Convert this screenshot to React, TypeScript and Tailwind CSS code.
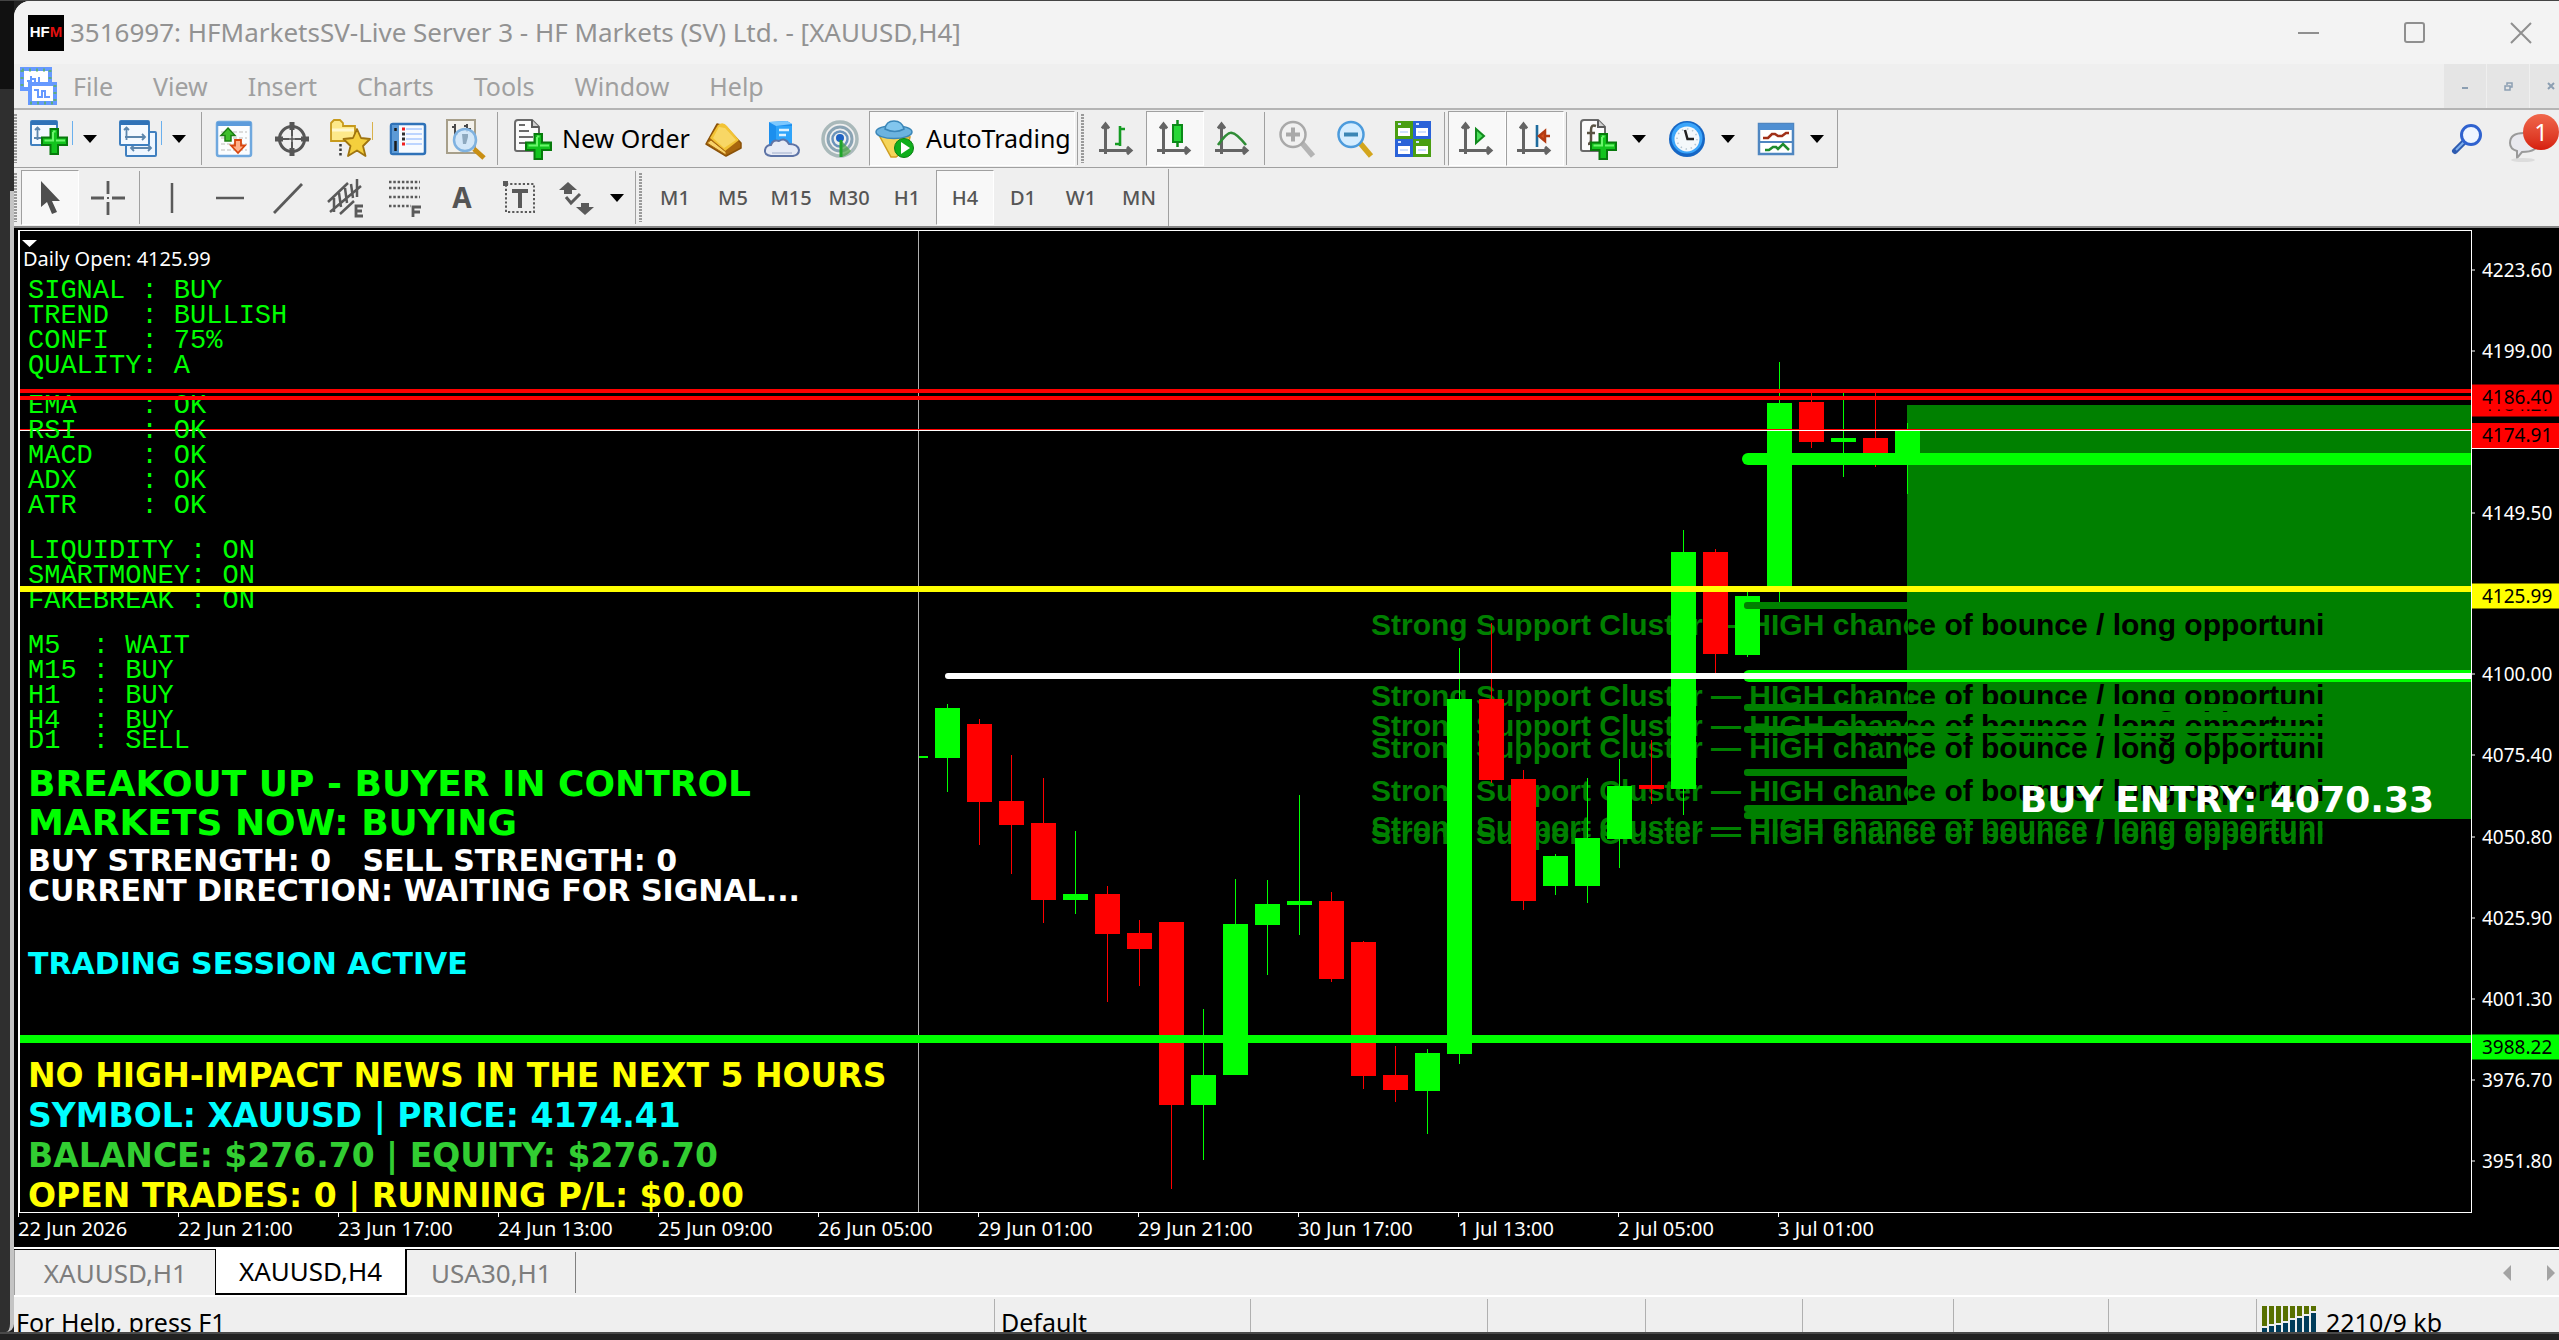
import React from "react";

type Kids = { children: React.ReactNode };

/* ---------- icons ---------- */

const Ico = ({ children, s = 38 }: Kids & { s?: number }) => (
  <svg width={s} height={s} viewBox={`0 0 ${s} ${s}`} fill="none" className="shrink-0 overflow-visible" aria-hidden="true">
    {children}
  </svg>
);

const Plus = ({ x, y }: { x: number; y: number }) => (
  <g transform={`translate(${x} ${y})`}>
    <path d="M9.500 1h7.500v8.500h9v7.500h-9v9h-7.500v-9H1V9.500h8.500z" fill="#12c41d" stroke="#077a0c" strokeWidth="2" />
    <path d="M12 3.500h2.500M12 4v8.500H3.500M15 12.500h9" stroke="#6cf56c" strokeWidth="2" />
  </g>
);

const NewChart = () => (
  <Ico>
    <rect x="1" y="1" width="26" height="24" rx="1" fill="#f4f9ff" stroke="#3f7fbf" strokeWidth="2" />
    <rect x="1" y="1" width="26" height="4" fill="#2f72b8" />
    <path d="M7.500 8v12M5 10l2.500-2.500L10 10M4 18h9" stroke="#5c86ad" strokeWidth="1.800" />
    <Plus x={11} y={8} />
    <path d="M42.500 1v24" stroke="#6ab0ee" />
  </Ico>
);

const Profiles = () => (
  <Ico>
    <rect x="7" y="12" width="30" height="24" rx="1" fill="#eef6ff" stroke="#3f7fbf" strokeWidth="2" />
    <path d="M12 28h20M15 25l-3 3 3 3M29 25l3 3-3 3" stroke="#5c86ad" strokeWidth="1.800" />
    <rect x="1" y="1" width="29" height="24" rx="1" fill="#f4f9ff" stroke="#3f7fbf" strokeWidth="2" />
    <rect x="1" y="1" width="29" height="4" fill="#2f72b8" />
    <path d="M7.500 8v12M5 10l2.500-2.500L10 10M6 17h20M23 14l3 3-3 3" stroke="#5c86ad" strokeWidth="1.800" />
    <path d="M42.500 1v24" stroke="#6ab0ee" />
  </Ico>
);

const MarketWatch = () => (
  <Ico>
    <rect x="2" y="2" width="34" height="34" rx="2" fill="#fbfdff" stroke="#6fa8de" strokeWidth="2.500" />
    <rect x="2" y="2" width="34" height="4" fill="#5b9bdc" />
    <path d="M6 12h26M6 18h26M6 24h26M6 30h26" stroke="#dcdcdc" strokeWidth="2" strokeDasharray="4 2" />
    <path d="M13 8l7 7.500h-4V21h-6v-5.500H6z" fill="#3fbf2c" stroke="#1d7d14" strokeWidth="1.500" />
    <path d="M23 33l-7-7.500h4V20h6v5.500h4z" fill="#ffb08a" stroke="#d8460f" strokeWidth="1.800" />
  </Ico>
);

const Crosshair = () => (
  <Ico>
    <circle cx="19" cy="19" r="12.500" stroke="#565656" strokeWidth="3" />
    <path d="M19 2v34M2 19h34" stroke="#565656" strokeWidth="2" />
    <path d="M19 2v8M19 28v8M2 19h8M28 19h8" stroke="#565656" strokeWidth="5" />
    <circle cx="19" cy="19" r="3" fill="#efefef" />
    <path d="M19 15v8M15 19h8" stroke="#565656" strokeWidth="1.500" />
  </Ico>
);

const FolderStar = () => (
  <Ico s={40}>
    <path d="M1 4l3-3h6l3 3v3h12v15H1z" fill="#fde98a" stroke="#c79a1c" strokeWidth="1.800" />
    <path d="M2 11h22" stroke="#fff8cf" strokeWidth="3" />
    <path d="M10.500 25v12" stroke="#3a3a3a" strokeWidth="2.500" strokeDasharray="2.500 2" />
    <path d="M27 10l4 9 9 1-7 7 2.500 10L27 31.500 18 37l2.500-10-7-7 9.500-1z" fill="#f4cf3d" stroke="#9f7410" strokeWidth="1.800" strokeLinejoin="round" />
    <path d="M42.500 3v18" stroke="#d9b24a" />
  </Ico>
);

const DataWindow = () => (
  <Ico>
    <rect x="2" y="4" width="34" height="30" rx="2" fill="#f7fbff" stroke="#2f72b8" strokeWidth="2.500" />
    <rect x="3" y="5" width="7" height="28" fill="#5c9ad6" />
    <path d="M6.500 8v3M6.500 21v10" stroke="#1a1a1a" strokeWidth="2.500" />
    <path d="M17 9h16M17 14h16M17 19h16M17 24h16" stroke="#a9c9ff" strokeWidth="1.500" />
    <path d="M13 9h3M13 24h3" stroke="#f02020" strokeWidth="3" />
    <path d="M13 14h3M13 19h3" stroke="#303030" strokeWidth="3" />
  </Ico>
);

const Tester = () => (
  <Ico s={42}>
    <rect x="2" y="2" width="28" height="33" fill="#f4f2ec" stroke="#a79f8a" strokeWidth="2" />
    <path d="M10 6v13M7 9h3M10 16h3M22 6v8M19 8h3M22 11h4" stroke="#4a4a4a" strokeWidth="2" />
    <path d="M29 31l10 9" stroke="#c98f14" strokeWidth="5" />
    <circle cx="20" cy="22" r="11" fill="#cfe6fa" fillOpacity=".9" stroke="#7fb2e0" strokeWidth="2.500" />
    <path d="M17 16h6v3l-2 7h-3z" fill="#8ea9bf" />
  </Ico>
);

const Sheet = ({ kids }: { kids: React.ReactNode }) => (
  <>
    <path d="M2 4q0-3 3-3h14l7 7v22q0 2-2 2H4q-2 0-2-2z" fill="#fbfbfb" stroke="#6a6a6a" strokeWidth="2" />
    <path d="M19 1v7h7" fill="#d0d0d0" stroke="#5a5a5a" strokeWidth="2" />
    {kids}
  </>
);

const NewOrderIcon = () => (
  <Ico s={40}>
    <Sheet kids={<path d="M6 6h6M6 12h10M6 18h14M6 24h8" stroke="#6a6a6a" strokeWidth="2.200" />} />
    <Plus x={12} y={14} />
  </Ico>
);

const Gold = () => (
  <Ico>
    <path d="M1 24L12 4l8 2 16 17v5L21 36z" fill="#a9670d" stroke="#8a5208" strokeWidth="1.500" strokeLinejoin="round" />
    <path d="M13 5Q18 1 22 6l12 14-14 11-2-2L5 18z" fill="#f2c335" />
    <path d="M14 7l6 1 11 12-12 8L8 18z" fill="#fbe07a" fillOpacity=".7" />
    <path d="M2 23l4-3 15 12v3z" fill="#f8d26a" stroke="#a9670d" />
  </Ico>
);

const CloudBox = () => (
  <Ico>
    <path d="M6 2l18-1 5 3v22H6z" fill="#1c8fee" />
    <path d="M6 2l18-1 5 3-16 2z" fill="#7cc8ff" />
    <path d="M13 6h16v20H13z" fill="#2fa4fa" />
    <path d="M16 10h10M16 15h7" stroke="#dff2ff" strokeWidth="2.500" />
    <path d="M8 36q-7-1-6-6 1-5 6-5 2-6 8-4 6-4 10 3 9 0 10 6 0 5-6 6z" fill="#e7ebf5" stroke="#5e74a6" strokeWidth="2" />
    <path d="M9 33h20" stroke="#c3cce0" strokeWidth="2" />
  </Ico>
);

const SignalIcon = () => (
  <Ico>
    <circle cx="19" cy="19" r="17" stroke="#a9b9ba" strokeWidth="3.500" />
    <circle cx="19" cy="19" r="12" stroke="#8aa4b4" strokeWidth="3" />
    <circle cx="19" cy="19" r="7.500" stroke="#6b93bb" strokeWidth="2.500" />
    <path d="M19 19L30 31q-5 6-11 6z" fill="#4fa64b" fillOpacity=".75" />
    <circle cx="19" cy="18" r="4" fill="#1f62c4" />
    <path d="M20 20v17" stroke="#1fa52a" strokeWidth="3" />
  </Ico>
);

const AutoIcon = () => (
  <Ico>
    <path d="M3 15l31 2-3 12-11 8h-5z" fill="#f5d55a" stroke="#cf9e22" strokeWidth="1.500" />
    <ellipse cx="18" cy="12" rx="18" ry="6.500" fill="#6cb3df" stroke="#3a86b8" strokeWidth="1.500" />
    <path d="M9 9Q10 1 18 1t10 8q-9 5-19 0z" fill="#82c6ee" stroke="#3a86b8" strokeWidth="1.500" />
    <circle cx="28" cy="28" r="9.500" fill="#0fae1c" stroke="#0a7f12" />
    <path d="M25 22l9 6-9 6z" fill="#fff" />
  </Ico>
);

const axis = <path d="M7.500 5v29M1 30.500h31M4 8.500L7.500 4 11 8.500M29 27l4 3.500-4 3.500" stroke="#646464" strokeWidth="3" />;

const BarsIcon = () => (
  <Ico>
    {axis}
    <path d="M22 6v20M22 9h5M17 24h5" stroke="#149b22" strokeWidth="2.600" />
  </Ico>
);
const CandleIcon = () => (
  <Ico>
    {axis}
    <path d="M21.500 0v27" stroke="#0b8a18" strokeWidth="2.500" />
    <rect x="17" y="5" width="9" height="17" fill="#27d637" stroke="#0b8a18" strokeWidth="2" />
  </Ico>
);
const LineIcon = () => (
  <Ico>
    {axis}
    <path d="M4 25Q14 11 18 13q4 0 14 12" stroke="#2f8c36" strokeWidth="2.600" />
  </Ico>
);
const Magnifier = ({ ring, lens, handle, sign, plus }: { ring: string; lens: string; handle: string; sign: string; plus?: boolean }) => (
  <Ico>
    <path d="M24 23l11 13" stroke={handle} strokeWidth="5.500" />
    <circle cx="15" cy="14.500" r="12.500" fill={lens} stroke={ring} strokeWidth="2.500" />
    <path d={plus ? "M8 14.500h14M15 7.500v14" : "M8 14.500h14"} stroke={sign} strokeWidth="4" />
  </Ico>
);
const Tile = () => (
  <Ico>
    {[
      [1, 1, "#4a9e12"],
      [19, 1, "#2a62d8"],
      [1, 19, "#2a62d8"],
      [19, 19, "#4a9e12"],
    ].map(([x, y, c]) => (
      <g key={`${x}-${y}`} transform={`translate(${x} ${y})`}>
        <rect width="18" height="18" fill={c as string} />
        <rect x="3" y="7" width="12" height="8" fill="#fff" />
        <path d="M3 3h3M5 11h8" stroke="#cfe0ff" strokeWidth="2" />
      </g>
    ))}
  </Ico>
);
const AutoScroll = () => (
  <Ico>
    {axis}
    <path d="M18 9v14l8-7z" fill="#4be05a" stroke="#118a1e" strokeWidth="2" />
  </Ico>
);
const ChartShift = () => (
  <Ico>
    {axis}
    <path d="M21 5v22" stroke="#1f6c9e" strokeWidth="2.600" />
    <path d="M34 16h-6M29 11l-6 5 6 5z" stroke="#b33a10" strokeWidth="2.500" fill="#d9501a" />
  </Ico>
);
const Indicators = () => (
  <Ico s={40}>
    <Sheet kids={<path d="M17 7q-5-2-5 4v10q0 4-3 4M8 14h8" stroke="#5a5344" strokeWidth="2.500" />} />
    <Plus x={11} y={14} />
  </Ico>
);
const Clock = () => (
  <Ico>
    <circle cx="19" cy="19" r="18" fill="#1666c4" />
    <circle cx="19" cy="18" r="15.500" fill="#3ba5fa" />
    <circle cx="19" cy="19" r="12.500" fill="#f4f8fb" />
    <circle cx="19" cy="19" r="10" stroke="#b7c6d2" strokeWidth="1.500" strokeDasharray="1.500 3.700" />
    <path d="M17 10l2.500 9H26" stroke="#222" strokeWidth="2.500" />
  </Ico>
);
const Template = () => (
  <Ico>
    <rect x="2" y="4" width="34" height="30" fill="#fff" stroke="#4f86c0" strokeWidth="2.500" />
    <rect x="2" y="4" width="34" height="6" fill="#4f8fd2" />
    <path d="M2 22h34" stroke="#4f86c0" strokeWidth="2" />
    <path d="M6 18h5l4-4h3l3 2h4l4-3h3" stroke="#a03018" strokeWidth="2.500" />
    <path d="M8 30h4l4-3h3l2 2 5-5 6 6" stroke="#1f8c2c" strokeWidth="2.500" />
  </Ico>
);
const Caret = () => (
  <svg width="14" height="8" viewBox="0 0 14 8" aria-hidden="true">
    <path d="M0 0h14L7 8z" fill="#000" />
  </svg>
);

const G = "#5a5a5a";
const Pointer = () => (
  <Ico>
    <path d="M10 2v26l6-5 5 12 5-2-5-11h8z" fill="#4f4f4f" />
  </Ico>
);
const Cross = () => (
  <Ico>
    <path d="M19 2v13M19 23v13M2 19h13M23 19h13" stroke={G} strokeWidth="2.800" />
    <path d="M18 19h2" stroke={G} strokeWidth="2" />
  </Ico>
);
const VLine = () => (
  <Ico>
    <path d="M19 4v30" stroke={G} strokeWidth="2.500" />
  </Ico>
);
const HLine = () => (
  <Ico>
    <path d="M5 19h28" stroke={G} strokeWidth="2.500" />
  </Ico>
);
const Trend = () => (
  <Ico>
    <path d="M5 34L33 5" stroke={G} strokeWidth="2.800" />
  </Ico>
);
const Channel = () => (
  <Ico>
    <path d="M1 23L21 4M3 33L34 7M13 35L27 22M7 19v14M12 14l2 14M18 9l2 15M24 5l2 14M30 0v18" stroke={G} strokeWidth="2.500" />
    <path d="M36 27h-7v10h7M29 32h6" stroke={G} strokeWidth="2.800" />
  </Ico>
);
const Fibo = () => (
  <Ico>
    <path d="M4 3h31M4 9h31M4 18h31M4 27h22" stroke={G} strokeWidth="2.500" strokeDasharray="2.500 1.800" />
    <path d="M28 38V28h8M28 33h7" stroke={G} strokeWidth="2.800" />
  </Ico>
);
const TextLabel = () => (
  <Ico>
    <rect x="5" y="5" width="28" height="28" stroke={G} strokeWidth="2" strokeDasharray="2.200 2" />
    <path d="M2 2h5v5H2z" fill={G} />
    <path d="M11 12h16M19 12v17" stroke={G} strokeWidth="4" />
  </Ico>
);
const Arrows = () => (
  <Ico>
    <path d="M10 3l9 8h-5v4H6v-4H1z" fill={G} />
    <path d="M27 36l-9-8h5v-4h8v4h5z" fill={G} />
    <path d="M8 18l5 6 9-9" stroke={G} strokeWidth="3" />
  </Ico>
);

/* ---------- toolbar parts ---------- */

const Grip = () => (
  <div className="my-1 mr-1 w-[3px] shrink-0 self-stretch bg-[repeating-linear-gradient(to_bottom,#9a9a9a_0_2px,#efefef_2px_3px)]" />
);
const Sep = () => <div className="mx-0.5 my-0.5 w-0.5 shrink-0 self-stretch border-l border-[#a0a0a0]" />;

const base = "flex h-[55px] shrink-0 items-center border";
const off = "border-transparent";
const on = "border-t-[#a0a0a0] border-l-[#a0a0a0] border-r-white border-b-white bg-[#f8f8f8]";

const Tool = ({ label, active, children }: Kids & { label: string; active?: boolean }) => (
  <button aria-label={label} className={`${base} w-[58px] justify-center ${active ? on : off}`}>
    {children}
  </button>
);
const DropTool = ({ label, tight, children }: Kids & { label: string; tight?: boolean }) => (
  <button aria-label={label} className={`${base} justify-between pl-2 ${tight ? "w-[84px] pr-2" : "w-[89px] pr-3"} ${off}`}>
    {children}
    <Caret />
  </button>
);

/* ---------- chart data ---------- */

// [up, open/close top, open/close bottom, high, low]
const candles: [number, number, number, number, number][] = [
  [1, 708, 758, 704, 792],
  [0, 724, 802, 719, 845],
  [0, 801, 825, 755, 874],
  [0, 823, 900, 778, 923],
  [1, 894, 900, 831, 914],
  [0, 894, 934, 886, 1002],
  [0, 933, 949, 920, 986],
  [0, 922, 1105, 922, 1189],
  [1, 1075, 1105, 1009, 1160],
  [1, 924, 1075, 879, 1075],
  [1, 904, 925, 880, 975],
  [1, 901, 905, 795, 935],
  [0, 901, 979, 892, 982],
  [0, 942, 1076, 941, 1089],
  [0, 1075, 1090, 1046, 1102],
  [1, 1053, 1091, 1049, 1134],
  [1, 699, 1054, 648, 1064],
  [0, 699, 780, 623, 783],
  [0, 779, 901, 770, 910],
  [1, 856, 886, 854, 895],
  [1, 838, 886, 778, 903],
  [1, 786, 839, 759, 868],
  [0, 785, 789, 740, 804],
  [1, 552, 789, 530, 815],
  [0, 552, 654, 549, 673],
  [1, 596, 655, 592, 657],
  [1, 403, 588, 362, 602],
  [0, 402, 442, 392, 448],
  [1, 438, 442, 392, 477],
  [0, 438, 455, 392, 467],
  [1, 431, 455, 423, 494],
];
const supportRows = [635, 706, 736, 758, 801, 837, 844];
const supportLines = [602, 704, 726, 769, 805, 812];
const dates = [
  "22 Jun 2026", "22 Jun 21:00", "23 Jun 17:00", "24 Jun 13:00", "25 Jun 09:00", "26 Jun 05:00",
  "29 Jun 01:00", "29 Jun 21:00", "30 Jun 17:00", "1 Jul 13:00", "2 Jul 05:00", "3 Jul 01:00",
];
const prices: [string, number][] = [
  ["4223.60", 40], ["4199.00", 121], ["4149.50", 283], ["4100.00", 444], ["4075.40", 525],
  ["4050.80", 607], ["4025.90", 688], ["4001.30", 769], ["3976.70", 850], ["3951.80", 931],
];
const tags: [string, number, string][] = [
  ["4184.27", 174, "bg-[#ff0000]"],
  ["4186.40", 167, "bg-[#ff0000]"],
  ["4174.91", 206, "bg-[#ff0000] border-b border-white"],
  ["4125.99", 366, "bg-[#ffff00]"],
  ["3988.22", 817, "bg-[#00ff00]"],
];

const signal = ["SIGNAL : BUY", "TREND  : BULLISH", "CONFI  : 75%", "QUALITY: A"];
const filters = ["EMA    : OK", "RSI    : OK", "MACD   : OK", "ADX    : OK", "ATR    : OK"];
const flow = ["LIQUIDITY : ON", "SMARTMONEY: ON", "FAKEBREAK : ON"];
const frames = ["M5  : WAIT", "M15 : BUY", "H1  : BUY", "H4  : BUY"];

const Block = ({ rows, className }: { rows: string[]; className: string }) => (
  <pre className={`font-['Liberation_Mono',monospace] text-[27px] leading-[25px] text-[#00ff00] ${className}`}>{rows.join("\n")}</pre>
);

const Big = ({ children, className }: Kids & { className: string }) => (
  <p className={`font-['DejaVu_Sans',sans-serif] font-bold whitespace-pre ${className}`}>{children}</p>
);

const Plot = () => (
  <div className="relative min-w-0 flex-1 overflow-hidden border-t border-r border-b border-l-2 border-white bg-black">
    <svg className="absolute inset-0 h-full w-full" aria-hidden="true">
      <defs>
        <linearGradient id="ink" gradientUnits="userSpaceOnUse" x1="1907" y1="0" x2="1909" y2="0">
          <stop offset=".5" stopColor="#008000" />
          <stop offset=".5" stopColor="#000000" />
        </linearGradient>
      </defs>
      <g transform="translate(-20 -231)">
        <rect x="918" y="231" width="1" height="100%" fill="#b0b0b0" />
        <rect x="1907" y="405" width="100%" height="414" fill="#008000" />
        {supportRows.map((y) => (
          <text key={y} x="1371" y={y} fill={y > 830 ? "#008000" : "url(#ink)"} className="font-['Liberation_Sans',sans-serif] text-[30px] font-bold">
            Strong Support Cluster — HIGH chance of bounce / long opportuni
          </text>
        ))}
        <rect x="919" y="756" width="9" height="2" fill="#00ff00" />
        {candles.map(([up, top, bottom, high, low], i) => {
          const x = 947 + i * 32;
          const c = up ? "#00ff00" : "#ff0000";
          return (
            <g key={i} fill={c}>
              <rect x={x} y={high} width="1" height={low - high} />
              <rect x={x - 12} y={top} width="25" height={bottom - top} />
            </g>
          );
        })}
        <rect x="0" y="429" width="110%" height="1" fill="#ff0000" />
        <rect x="0" y="430" width="110%" height="1" fill="#ffffff" />
      </g>
    </svg>

    <section aria-label="Indicator readout" className="relative">
      <svg width="15" height="7" viewBox="0 0 15 7" className="mt-[9px] ml-0.5" aria-hidden="true">
        <path d="M0 0h15L7.500 7z" fill="#fff" />
      </svg>
      <p className="ml-[3px] text-xl leading-6 text-white">Daily Open: 4125.99</p>
      <div className="ml-2">
        <Block rows={signal} className="mt-2" />
        <Block rows={filters} className="mt-[15px]" />
        <Block rows={flow} className="mt-5" />
        <Block rows={frames} className="mt-5" />
        <Block rows={["D1  : SELL"]} className="-mt-[5px]" />
        <div className="mt-2.5 text-4xl text-[#00ff00]">
          <Big className="leading-[39px]">BREAKOUT UP - BUYER IN CONTROL</Big>
          <Big className="leading-[39px]">MARKETS NOW: BUYING</Big>
        </div>
        <div className="mt-1 text-3xl text-white">
          <Big className="leading-[30px]">{"BUY STRENGTH: 0   SELL STRENGTH: 0"}</Big>
          <Big className="leading-[30px]">CURRENT DIRECTION: WAITING FOR SIGNAL...</Big>
        </div>
        <Big className="mt-[43px] text-3xl leading-[30px] text-[#00ffff]">TRADING SESSION ACTIVE</Big>
        <div className="mt-[77px] text-[33px]">
          <Big className="leading-10 text-[#ffff00]">NO HIGH-IMPACT NEWS IN THE NEXT 5 HOURS</Big>
          <Big className="leading-10 text-[#00ffff]">SYMBOL: XAUUSD | PRICE: 4174.41</Big>
          <Big className="leading-10 text-[#32cd32]">BALANCE: $276.70 | EQUITY: $276.70</Big>
          <Big className="mt-1 leading-8 text-[#ffff00]">OPEN TRADES: 0 | RUNNING P/L: $0.00</Big>
        </div>
      </div>
    </section>

    <svg className="absolute inset-0 h-full w-full" aria-hidden="true">
      <g transform="translate(-20 -231)">
        <rect x="0" y="389" width="110%" height="4" fill="#ff0000" />
        <rect x="0" y="396" width="110%" height="4" fill="#ff0000" />
        {supportLines.map((y) => (
          <rect key={y} x="1744" y={y} width="100%" height="7" rx="3" fill="#008000" />
        ))}
        <rect x="1742" y="453" width="100%" height="12" rx="6" fill="#00ff00" />
        <rect x="1743" y="670" width="100%" height="12" rx="6" fill="#00ff00" />
        <rect x="945" y="673" width="100%" height="6" rx="3" fill="#ffffff" />
        <rect x="0" y="586" width="110%" height="6" fill="#ffff00" />
        <rect x="0" y="1035" width="110%" height="8" fill="#00ff00" />
      </g>
    </svg>
    <Big className="absolute top-[549px] right-[37px] text-4xl leading-[39px] text-white">BUY ENTRY: 4070.33</Big>
  </div>
);

const PriceAxis = () => (
  <div className="relative w-[87px] shrink-0 overflow-hidden bg-black text-[19px] leading-[25px]">
    {prices.map(([p, y]) => (
      <div key={p} className="absolute left-0 flex -translate-y-1/2 items-center gap-[7px] text-white" style={{ top: y }}>
        <span className="h-px w-[3px] bg-white" />
        {p}
      </div>
    ))}
    {tags.map(([p, y, c]) => (
      <div key={p} className={`absolute inset-x-0 -translate-y-1/2 pl-2.5 text-black ${c}`} style={{ top: y }}>
        {p}
      </div>
    ))}
  </div>
);

/* ---------- window ---------- */

const menus = ["File", "View", "Insert", "Charts", "Tools", "Window", "Help"];
const timeframes = ["M1", "M5", "M15", "M30", "H1", "H4", "D1", "W1", "MN"];
const greens = [20, 18, 17, 15, 12, 10, 8, 5];

export default function App() {
  return (
    <div className="flex min-h-screen flex-col bg-[#222222] font-['Noto_Sans',sans-serif] text-black">
      <div className="flex flex-1 overflow-hidden border-t border-[#444444]">
        <div className="flex w-[14px] shrink-0 flex-col">
          <div className="h-[88px] bg-[#111111]" />
          <div className="h-[102px] bg-[#2f2f2f]" />
          <div className="flex-1 rounded-br-lg border-r-4 border-[#c4c4c4] bg-[#2f2f2f]" />
        </div>

        <div className="flex min-w-0 flex-1 flex-col rounded-tl-2xl bg-[#efefef]">
          <header className="flex h-[63px] items-center rounded-tl-2xl bg-[#f3f3f3] pl-[14px]">
            <div className="flex h-9 w-9 items-center justify-center bg-black text-[15px] font-bold text-white">
              <span className="font-['Liberation_Sans',sans-serif]">
                HF<span className="text-[#e01010]">M</span>
              </span>
            </div>
            <h1 className="ml-1.5 flex-1 text-[26px] text-[#929292]">
              3516997: HFMarketsSV-Live Server 3 - HF Markets (SV) Ltd. - [XAUUSD,H4]
            </h1>
            <div className="flex items-center gap-[84px] pr-[27px] text-[#8f8f8f]">
              <button aria-label="Minimize">
                <svg width="22" height="22" fill="none" stroke="currentColor" strokeWidth="2"><path d="M0 11h21" /></svg>
              </button>
              <button aria-label="Maximize">
                <svg width="22" height="22" fill="none" stroke="currentColor" strokeWidth="2"><rect x="1" y="1" width="19" height="19" rx="2" /></svg>
              </button>
              <button aria-label="Close">
                <svg width="22" height="22" fill="none" stroke="currentColor" strokeWidth="2"><path d="M1 1l20 20M21 1L1 21" /></svg>
              </button>
            </div>
          </header>

          <nav className="flex h-[46px] items-center border-b-2 border-[#b4b4b4] pl-1.5">
            <svg width="37" height="38" viewBox="0 0 37 38" fill="none" aria-hidden="true">
              <rect x="2" y="2" width="28" height="20" fill="#fff" stroke="#6699ff" strokeWidth="4" />
              <path d="M2 3h28M2 3v20M30 3v14" stroke="#5fae7d" strokeWidth="3" strokeDasharray="2 5" />
              <path d="M7 14h4v-5M11 12h4v4h4v-6" stroke="#6699ff" strokeWidth="2" />
              <rect x="10" y="17" width="25" height="19" fill="#fff" stroke="#6699ff" strokeWidth="4" />
              <path d="M10 36h25M35 18v18" stroke="#5fae7d" strokeWidth="3" strokeDasharray="2 5" />
              <path d="M14 23h4v7h4v-6h3v6h5" stroke="#6699ff" strokeWidth="2" />
            </svg>
            {menus.map((m) => (
              <button key={m} className="px-5 text-[25px] leading-10 text-[#a0a0a0] first-of-type:pl-4">
                {m}
              </button>
            ))}
            <div className="ml-auto flex gap-px self-stretch text-[#8c9fb2]">
              <button aria-label="Minimize chart" className="flex w-[42px] items-center justify-center bg-[#e5e5e5]">
                <svg width="8" height="8"><path d="M1 6h6" stroke="currentColor" strokeWidth="2" /></svg>
              </button>
              <button aria-label="Restore chart" className="flex w-[42px] items-center justify-center bg-[#e5e5e5]">
                <svg width="9" height="9" fill="none" stroke="currentColor" strokeWidth="1.500"><path d="M3 3V1h5v4H6M1 4h5v4H1z" /></svg>
              </button>
              <button aria-label="Close chart" className="flex w-[29px] items-center justify-end bg-[#e5e5e5] pr-1">
                <svg width="8" height="8"><path d="M1 1l6 6M7 1L1 7" stroke="currentColor" strokeWidth="2" /></svg>
              </button>
            </div>
          </nav>

          <div className="flex h-[59px] items-start">
            <div className="flex h-[58px] items-center border-r border-b border-[#a0a0a0] text-[25px]">
              <Grip />
              <DropTool label="New chart"><NewChart /></DropTool>
              <DropTool label="Profiles"><Profiles /></DropTool>
              <Sep />
              <Tool label="Market Watch"><MarketWatch /></Tool>
              <Tool label="Crosshair data"><Crosshair /></Tool>
              <Tool label="Navigator"><FolderStar /></Tool>
              <Tool label="Terminal"><DataWindow /></Tool>
              <Tool label="Strategy Tester"><Tester /></Tool>
              <Sep />
              <button className={`${base} w-[194px] gap-[9px] pl-[11px] ${off}`}>
                <NewOrderIcon />
                <span className="whitespace-nowrap">New Order</span>
              </button>
              <Tool label="MetaEditor"><Gold /></Tool>
              <Tool label="Virtual hosting"><CloudBox /></Tool>
              <Tool label="Signals"><SignalIcon /></Tool>
              <button className={`${base} w-[206px] gap-3 pl-1.5 ${on}`}>
                <AutoIcon />
                <span>AutoTrading</span>
              </button>
              <Sep />
              <Grip />
              <Tool label="Bar chart"><BarsIcon /></Tool>
              <Tool label="Candlesticks" active><CandleIcon /></Tool>
              <Tool label="Line chart"><LineIcon /></Tool>
              <Sep />
              <Tool label="Zoom in"><Magnifier ring="#a9a9a9" lens="#f1f1f1" handle="#b4b4b4" sign="#a9a9a9" plus /></Tool>
              <Tool label="Zoom out"><Magnifier ring="#4c9bdc" lens="#d5edff" handle="#d3a51d" sign="#3b86b5" /></Tool>
              <Tool label="Tile windows"><Tile /></Tool>
              <Sep />
              <Tool label="Auto scroll" active><AutoScroll /></Tool>
              <Tool label="Chart shift" active><ChartShift /></Tool>
              <Sep />
              <DropTool label="Indicators"><Indicators /></DropTool>
              <DropTool label="Periods"><Clock /></DropTool>
              <DropTool label="Templates"><Template /></DropTool>
            </div>
            <div className="ml-auto flex h-[58px] items-center gap-[26px]">
              <button aria-label="Search">
                <svg width="32" height="32" viewBox="0 0 32 32" fill="none">
                  <path d="M15 17L4 28" stroke="#2d5bb0" strokeWidth="6" strokeLinecap="round" />
                  <path d="M13 19L5 27" stroke="#7fb0ee" strokeWidth="2" />
                  <circle cx="20" cy="12" r="9.500" fill="#eef5ff" stroke="#2f62cf" strokeWidth="3" />
                </svg>
              </button>
              <button aria-label="Messages" className="relative h-[50px] w-[50px]">
                <svg width="50" height="50" viewBox="0 0 50 50" fill="none" aria-hidden="true">
                  <path d="M1 29q0-10 14-10t14 9q0 10-16 10l-5 6v-7Q1 35 1 29z" fill="#e9e9ef" stroke="#9a9a9a" strokeWidth="2" />
                  <ellipse cx="14" cy="46" rx="12" ry="2" fill="#dcdcdc" />
                </svg>
                <span className="absolute top-0 right-0 flex h-9 w-9 items-center justify-center rounded-full bg-gradient-to-b from-[#f0664a] to-[#d61c0c] text-2xl text-white">
                  1
                </span>
              </button>
            </div>
          </div>

          <div className="flex h-[59px] border-b-2 border-[#858585]">
            <div className="flex items-center border-r border-[#a0a0a0] text-xl text-[#555555]">
              <Grip />
              <Tool label="Cursor" active><Pointer /></Tool>
              <Tool label="Crosshair"><Cross /></Tool>
              <Sep />
              <Tool label="Vertical line"><VLine /></Tool>
              <Tool label="Horizontal line"><HLine /></Tool>
              <Tool label="Trendline"><Trend /></Tool>
              <Tool label="Equidistant channel"><Channel /></Tool>
              <Tool label="Fibonacci retracement"><Fibo /></Tool>
              <button aria-label="Text" className={`${base} w-[58px] justify-center text-[28px] font-bold ${off}`}>A</button>
              <Tool label="Text label"><TextLabel /></Tool>
              <DropTool label="Arrows" tight><Arrows /></DropTool>
              <Sep />
              <Grip />
              {timeframes.map((t) => (
                <button key={t} className={`${base} w-[58px] justify-center font-medium ${t === "H4" ? on : off}`}>
                  {t}
                </button>
              ))}
            </div>
          </div>

          <main className="flex flex-1 flex-col bg-black pt-0.5 pl-1">
            <div className="flex flex-1">
              <Plot />
              <PriceAxis />
            </div>
            <div className="flex h-[34px] overflow-hidden text-xl text-white">
              {dates.map((d) => (
                <div key={d} className="w-40 shrink-0">
                  <div className="h-1 w-px bg-white" />
                  <div className="leading-6">{d}</div>
                </div>
              ))}
            </div>
          </main>

          <div className="flex h-[50px] items-stretch border-t-2 border-b-2 border-white">
            <div role="tablist" className="flex flex-1 border-t border-black text-[26px] leading-[42px] text-[#7d7d7d]">
              <button role="tab" className="w-[201px] border-l border-[#a0a0a0] pr-7 text-right whitespace-nowrap">XAUUSD,H1</button>
              <button role="tab" aria-selected="true" className="-mt-px w-[192px] border-r-2 border-b-2 border-l border-black bg-white text-center text-black">
                XAUUSD,H4
              </button>
              <button role="tab" className="my-0.5 w-[169px] border-r border-[#808080] pl-6 text-left leading-[38px]">USA30,H1</button>
              <div className="mr-1 ml-auto flex items-center gap-9">
                <button aria-label="Previous tab">
                  <svg width="8" height="16"><path d="M8 0v16L0 8z" fill="#a3a3a3" /></svg>
                </button>
                <button aria-label="Next tab">
                  <svg width="8" height="16"><path d="M0 0v16l8-8z" fill="#a3a3a3" /></svg>
                </button>
              </div>
            </div>
          </div>

          <footer className="flex h-[35px] items-start overflow-hidden pl-0.5 text-[25px] leading-[50px]">
            <div className="w-[978px]">For Help, press F1</div>
            <div className="mt-0.5 w-[256px] border-l border-[#b0b0b0] pl-1.5 leading-[46px]">Default</div>
            <div className="mt-0.5 h-full w-[237px] border-l border-[#b0b0b0]" />
            <div className="mt-0.5 h-full w-[158px] border-l border-[#b0b0b0]" />
            <div className="mt-0.5 h-full w-[157px] border-l border-[#b0b0b0]" />
            <div className="mt-0.5 h-full w-[151px] border-l border-[#b0b0b0]" />
            <div className="mt-0.5 h-full w-[155px] border-l border-[#b0b0b0]" />
            <div className="mt-0.5 h-full w-[148px] border-l border-[#b0b0b0]" />
            <div className="mt-0.5 flex flex-1 border-l border-[#b0b0b0] pl-[5px] leading-[46px] whitespace-nowrap">
              <svg width="56" height="28" className="mt-[7px] mr-2 shrink-0" aria-hidden="true">
                {greens.map((h, i) => (
                  <g key={i}>
                    <rect x={i * 7} y="0" width="5" height={h} fill="#587000" />
                    <rect x={i * 7} y={h + 2} width="5" height={28 - h} fill="#003c5a" />
                  </g>
                ))}
              </svg>
              2210/9 kb
            </div>
          </footer>
        </div>
      </div>
      <div className="h-[9px] shrink-0 border-t-2 border-[#4a4a4a] bg-[#222222]" />
    </div>
  );
}
